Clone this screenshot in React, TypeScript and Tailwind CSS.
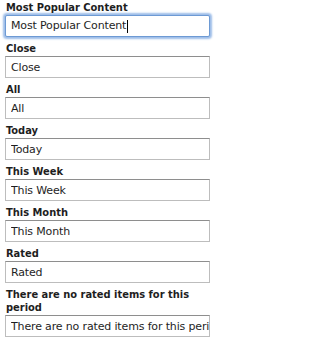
const fields = [
  'Close',
  'All',
  'Today',
  'This Week',
  'This Month',
  'Rated',
  'There are no rated items for this period',
]

export default function App() {
  return (
    <div className="w-[218px] min-h-[343px] bg-white pt-[1px] pl-[5px] text-[#1e1e1e]">
      <div className="mb-[5px]">
        <div className="w-[205px] pl-[1px] text-[11px] font-bold leading-[13px] font-['DejaVu_Sans_Condensed',sans-serif]">
          Most Popular Content
        </div>
        <div className="mt-[1px] flex h-[22px] w-[205px] items-center rounded-[2px] border border-[#6d9ad4] bg-white pl-[5px] text-[11px] tracking-[-0.15px] font-['DejaVu_Sans',sans-serif] shadow-[0_0_2px_2px_#9dbde8]">
          <span>Most Popular Content</span>
          <span className="ml-[1px] inline-block h-[13px] w-[1px] bg-black" />
        </div>
      </div>
      {fields.map((f) => (
        <label key={f} className="mb-[5px] block">
          <span className="block w-[205px] pl-[1px] text-[11px] font-bold leading-[13px] font-['DejaVu_Sans_Condensed',sans-serif]">
            {f}
          </span>
          <input
            readOnly
            value={f}
            className="mt-[1px] block h-[22px] w-[205px] border border-[#bdbdbd] border-t-[#8e8e8e] bg-white pl-[5px] text-[11px] tracking-[-0.15px] text-[#1e1e1e] outline-none font-['DejaVu_Sans',sans-serif]"
          />
        </label>
      ))}
    </div>
  )
}
